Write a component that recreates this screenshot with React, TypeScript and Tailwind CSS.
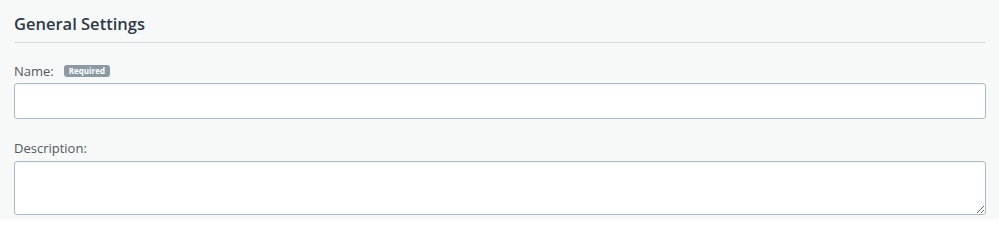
export default function App() {
  return (
    <div className="min-h-[219px] w-full bg-[#f7f9f9] pl-[14px] pr-[13px] pt-[13px] font-['Open_Sans',sans-serif] text-[#52585e]">
      <h2 className="border-b border-[#d5dde0] pb-[8px] text-[16.5px] font-semibold leading-[21px] text-[#2c3a47]">
        General Settings
      </h2>

      <div className="mt-[19px]">
        <div className="flex items-center gap-[10px] text-[13px] leading-[18px]">
          <span>Name:</span>
          <span className="rounded-[3px] bg-[#8c9aa3] px-[5px] py-[1px] text-[8px] font-bold leading-[10px] text-white">
            Required
          </span>
        </div>
        <input
          type="text"
          className="mt-[3px] block h-[36px] w-full rounded-[3px] border border-[#adbcc4] bg-white px-[8px] text-[13px] shadow-[inset_0_1px_2px_rgba(0,0,0,0.06)] outline-none"
        />
      </div>

      <div className="mt-[20px]">
        <label className="block text-[13px] leading-[18px]">Description:</label>
        <textarea className="mt-[4px] block h-[54px] w-full rounded-[3px] border border-[#adbcc4] bg-white px-[8px] py-[6px] text-[13px] shadow-[inset_0_1px_2px_rgba(0,0,0,0.06)] outline-none" />
      </div>
    </div>
  )
}
